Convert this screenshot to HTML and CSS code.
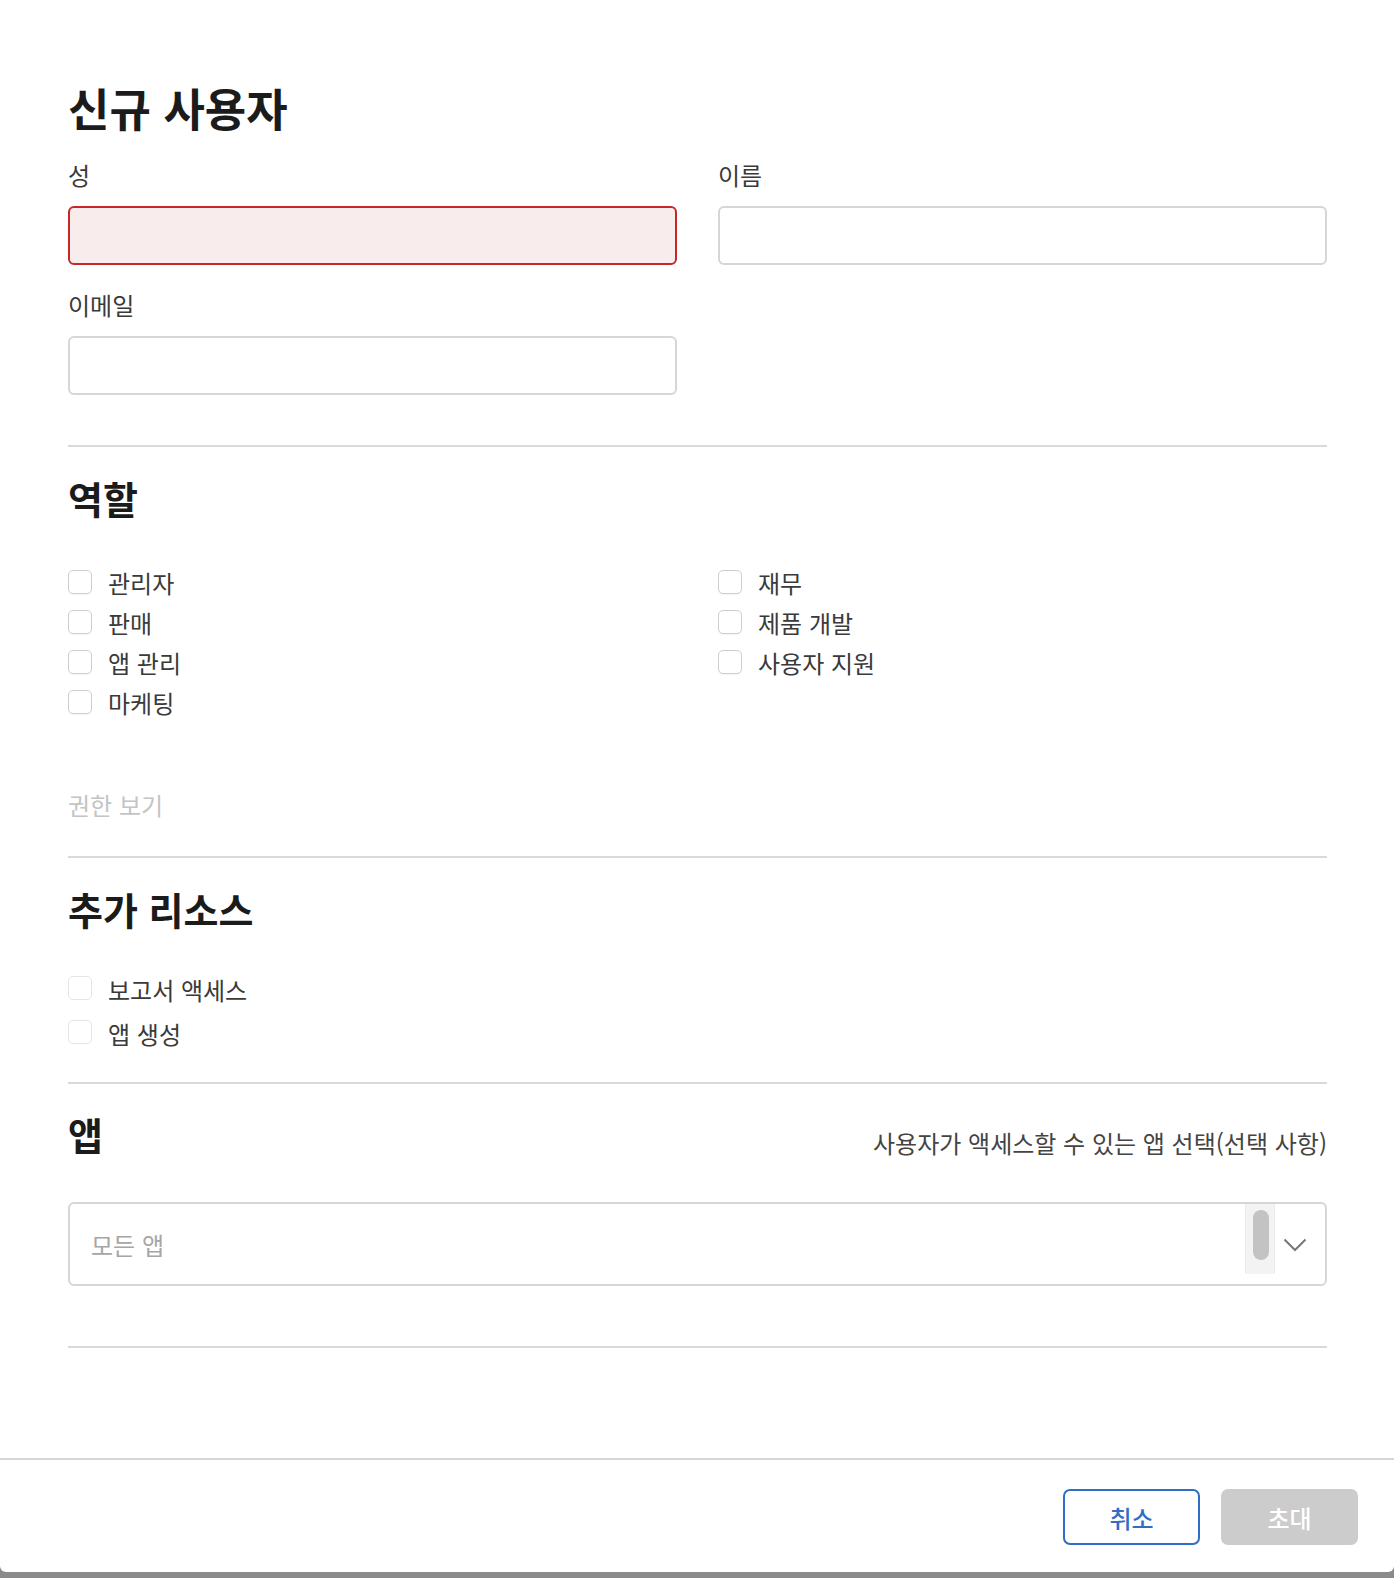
FILE: index.html
```html
<!DOCTYPE html>
<html lang="ko">
<head>
  <meta charset="UTF-8" />
  <meta name="viewport" content="width=device-width, initial-scale=1.0"/>
  <title>신규 사용자</title>
  <link rel="stylesheet" href="styles.css">
</head>
<body>
  <div class="modal">
    <main class="modal-body">
      <h1>신규 사용자</h1>

      <section class="campos">
        <div class="campo">
          <label for="sobrenome">성</label>
          <input id="sobrenome" type="text" class="erro">
        </div>
        <div class="campo">
          <label for="nome">이름</label>
          <input id="nome" type="text">
        </div>
        <div class="campo">
          <label for="email">이메일</label>
          <input id="email" type="email">
        </div>
      </section>

      <hr>

      <h2>역할</h2>
      <section class="papeis">
        <div class="coluna">
          <label class="check"><input type="checkbox"> 관리자</label>
          <label class="check"><input type="checkbox"> 판매</label>
          <label class="check"><input type="checkbox"> 앱 관리</label>
          <label class="check"><input type="checkbox"> 마케팅</label>
        </div>
        <div class="coluna">
          <label class="check"><input type="checkbox"> 재무</label>
          <label class="check"><input type="checkbox"> 제품 개발</label>
          <label class="check"><input type="checkbox"> 사용자 지원</label>
        </div>
      </section>
      <a class="ver-permissoes">권한 보기</a>

      <hr>

      <h2>추가 리소스</h2>
      <section class="recursos">
        <label class="check fraco"><input type="checkbox"> 보고서 액세스</label>
        <label class="check fraco"><input type="checkbox"> 앱 생성</label>
      </section>

      <hr>

      <div class="apps-topo">
        <h2>앱</h2>
        <span class="dica">사용자가 액세스할 수 있는 앱 선택(선택 사항)</span>
      </div>
      <div class="seletor">
        <span class="placeholder">모든 앱</span>
        <div class="trilho"><div class="polegar"></div></div>
        <div class="seta">
          <svg width="24" height="14" viewBox="0 0 24 14"><path d="M1.5 1.5 L12 12 L22.5 1.5" fill="none" stroke="#777" stroke-width="2"/></svg>
        </div>
      </div>

      <hr class="ultimo">
    </main>

    <footer>
      <button class="btn btn-cancelar">취소</button>
      <button class="btn btn-convidar" disabled>초대</button>
    </footer>
  </div>
</body>
</html>
```

FILE: styles.css
```css
* { margin: 0; padding: 0; box-sizing: border-box; }
body {
  font-family: "Noto Sans CJK KR", "Noto Sans", sans-serif;
  background: #8a8a8a;
  color: #333;
  min-height: 100vh;
}
.modal {
  background: #fff;
  height: 1572px;
  border-radius: 0 0 6px 6px;
  display: flex;
  flex-direction: column;
}
.modal-body {
  flex: 1;
  padding: 82px 67px 0 68px;
}
h1 {
  font-size: 45px;
  line-height: 52px;
  font-weight: 700;
  color: #1b1b1b;
  margin-bottom: 26px;
}
h2 {
  font-size: 38px;
  line-height: 44px;
  font-weight: 700;
  color: #1b1b1b;
}
hr {
  border: none;
  border-top: 2px solid #d9d9d9;
}
.campos {
  display: grid;
  grid-template-columns: 1fr 1fr;
  column-gap: 41px;
  row-gap: 25px;
  margin-bottom: 50px;
}
.campo label {
  display: block;
  font-size: 24px;
  line-height: 30px;
  color: #3a3a3a;
  margin-bottom: 16px;
}
.campo input {
  display: block;
  width: 100%;
  height: 59px;
  border: 2px solid #d6d6d6;
  border-radius: 6px;
  background: #fff;
  font-size: 22px;
  padding: 0 16px;
  outline: none;
}
.campo input.erro {
  border-color: #c62828;
  background: #f9eced;
}
hr + h2 { margin-top: 29px; }
.papeis {
  display: grid;
  grid-template-columns: 1fr 1fr;
  column-gap: 41px;
  margin-top: 42px;
}
.check {
  display: flex;
  align-items: center;
  gap: 16px;
  height: 40px;
  font-size: 24px;
  color: #3a3a3a;
}
.check input {
  appearance: none;
  -webkit-appearance: none;
  width: 24px;
  height: 24px;
  border: 1px solid #cfcfcf;
  border-radius: 5px;
  background: #fff;
  box-shadow: 0 1px 1px rgba(0,0,0,0.05);
  flex-shrink: 0;
}
.ver-permissoes {
  display: block;
  margin-top: 68px;
  margin-bottom: 36px;
  font-size: 24px;
  line-height: 30px;
  color: #c4c4c4;
}
.recursos {
  margin-top: 37px;
  margin-bottom: 26px;
}
.check.fraco {
  height: 44px;
  align-items: flex-start;
  line-height: 44px;
}
.check.fraco input {
  margin-top: 8px;
  border-color: #e6e6e6;
  box-shadow: none;
}
.apps-topo {
  display: flex;
  justify-content: space-between;
  align-items: flex-end;
  margin-top: 28px;
}
.dica {
  font-size: 24px;
  line-height: 30px;
  color: #444;
  margin-bottom: -2px;
}
.seletor {
  display: flex;
  align-items: flex-start;
  height: 84px;
  margin-top: 46px;
  border: 2px solid #d6d6d6;
  border-radius: 6px;
}
.placeholder {
  flex: 1;
  align-self: center;
  padding-left: 21px;
  font-size: 24px;
  color: #a6a6a6;
}
.trilho {
  width: 30px;
  height: 70px;
  background: #f3f3f3;
  border-left: 1px solid #ececec;
  border-right: 1px solid #ececec;
  padding: 6px 0 0 7px;
}
.polegar {
  width: 16px;
  height: 50px;
  border-radius: 8px;
  background: #c3c3c3;
}
.seta {
  width: 50px;
  align-self: center;
  display: flex;
  justify-content: center;
  padding: 2px 10px 0 0;
}
hr.ultimo { margin-top: 60px; }
footer {
  border-top: 2px solid #d6d6d6;
  display: flex;
  justify-content: flex-end;
  gap: 21px;
  padding: 29px 36px 27px 0;
}
.btn {
  width: 137px;
  height: 56px;
  border-radius: 7px;
  font-family: inherit;
  font-size: 24px;
  font-weight: 500;
}
.btn-cancelar {
  background: #fff;
  border: 2px solid #2f6ec4;
  color: #2f6ec4;
}
.btn-convidar {
  background: #cccccc;
  border: none;
  color: #fff;
}
```
